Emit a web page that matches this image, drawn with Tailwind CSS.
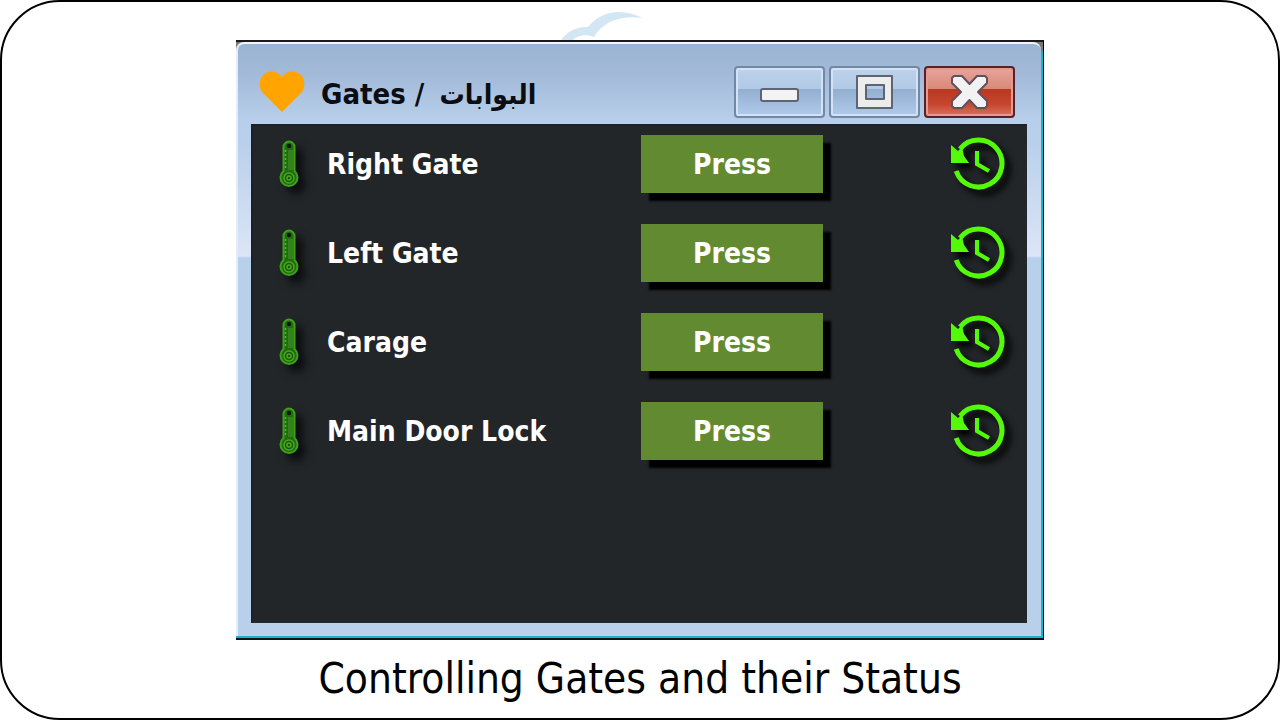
<!DOCTYPE html>
<html lang="en">
<head>
  <meta charset="UTF-8" />
  <meta name="viewport" content="width=device-width, initial-scale=1.0"/>
  <title>Controlling Gates and their Status</title>
  <script src="https://cdn.jsdelivr.net/npm/@tailwindcss/browser@4"></script>
</head>
<body class="bg-white min-h-screen flex font-['DejaVu_Sans_Condensed','DejaVu_Sans',sans-serif]">

  <!-- Shared icons -->
  <svg class="hidden">
    <symbol id="thermometer" viewBox="0 0 20 48">
      <path d="M4.500 7a5.500 5.500 0 0 1 11 0v24a8.500 8.500 0 1 1-11 0z" fill="#226a14" stroke="#3fa01a" stroke-width="2"/>
      <path d="M9 10h5.500v20H9z" fill="#34821b"/>
      <path d="M6.500 10v20" stroke="#52be22" stroke-width="1.500" stroke-dasharray="2 2"/>
      <circle cx="10" cy="6" r="2.200" fill="#0b1a08"/>
      <circle cx="10" cy="38" r="5" fill="#1c5412" stroke="#46ac1a" stroke-width="1.500"/>
      <circle cx="10" cy="38" r="2" fill="#1c5412" stroke="#46ac1a" stroke-width="1.500"/>
    </symbol>
    <symbol id="history" viewBox="0 0 56 54">
      <path d="M6.200 34A23.500 23.500 0 1 0 10 12" fill="none" stroke="#54fb08" stroke-width="5"/>
      <path d="M1 8l7 6 4-4 2 9 5 7H1z" fill="#54fb08"/>
      <path d="M27 14v13l12 7" fill="none" stroke="#54fb08" stroke-width="4"/>
    </symbol>
  </svg>

  <!-- Slide frame -->
  <main class="relative w-full flex flex-col items-center pt-[38px] border-2 border-black rounded-[60px]">

    <!-- Cloud behind the window -->
    <svg class="absolute top-[9px] left-1/2 -ml-[80px] w-[84px] h-8" viewBox="0 0 84 32">
      <path d="M0 31C6 20 18 15 28 16C42 -1 62 -3 83 7C62 4 43 10 34 26C24 22 16 25 11 31z" fill="#d3e6f3"/>
    </svg>

    <!-- Window -->
    <section class="relative w-full max-w-[808px] border-t-2 border-t-[#1a1a1a] border-b-2 border-b-[#061418] border-r border-r-black bg-[linear-gradient(#777777_0px,#777777_8px,#16b5cc_10px)] pb-[2px] pr-[2px]">
      <div class="border-t-2 border-l-2 border-t-[#f2f6fb] border-l-[#e4ecf7] rounded-t-lg bg-[linear-gradient(#9ab4d3_0px,#a2bad8_30px,#b7cfea_76px,#b9d0eb_100px,#dce5f6_212px,#b9d0eb_214px)] pl-[13px] pr-[14px] pb-[13px]">

        <header class="h-20 flex items-center">
          <svg class="w-[46px] h-[42px] ml-2 mt-5 mb-1" viewBox="0 0 46 42">
            <path d="M23 41L4 22C-1 17 0 9 4 4C9 -1 18 -1 23 6C28 -1 37 -1 42 4C46 9 47 17 42 22z" fill="#ffa400"/>
          </svg>
          <h1 class="ml-4 mt-5 flex-1 text-[29px] leading-8 font-bold text-[#0b0d12]">Gates / <span lang="ar" dir="rtl" class="ml-1.5 text-[28px]">البوابات</span></h1>
          <div class="flex gap-1 mt-4 mr-3">
            <button aria-label="Minimize" class="w-[91px] h-[52px] flex justify-center items-center rounded border-2 border-[#7288a5] shadow-[inset_0_0_0_2px_#d3e2f4] bg-[linear-gradient(#bdd2ea_0%,#b2cae6_43%,#93afcf_44%,#b0caea_100%)]">
              <svg class="w-10 h-10 mt-1" viewBox="0 0 40 40"><rect x="1" y="15" width="37" height="12" rx="2" fill="#f3f3f3" stroke="#5f6472" stroke-width="2"/></svg>
            </button>
            <button aria-label="Maximize" class="w-[91px] h-[52px] flex justify-center items-center rounded border-2 border-[#7288a5] shadow-[inset_0_0_0_2px_#d3e2f4] bg-[linear-gradient(#bdd2ea_0%,#b2cae6_43%,#93afcf_44%,#b0caea_100%)]">
              <svg class="w-10 h-10" viewBox="0 0 40 40"><path d="M2 4h35v32H2zM11 13v14h18V13z" fill="#ececec" fill-rule="evenodd" stroke="#5f6472" stroke-width="2" stroke-linejoin="round"/></svg>
            </button>
            <button aria-label="Close" class="w-[91px] h-[52px] flex justify-center items-center rounded border-2 border-[#57202b] shadow-[inset_0_0_0_2px_#e59a8f] bg-[linear-gradient(#e6a69b_0%,#da8878_43%,#b93822_44%,#c5452e_75%,#d87360_100%)]">
              <svg class="w-10 h-10" viewBox="0 0 40 40"><path d="M4 4h8l7.500 8L27 4h8l2 2v5l-9 9 9 9v5l-2 2h-8l-7.500-8L12 36H4l-2-2v-5l9-9-9-9V6z" fill="#f2f2f2" stroke="#605060" stroke-width="2" stroke-linejoin="round"/></svg>
            </button>
          </div>
        </header>

        <ul class="min-h-[499px] flex flex-col gap-[31px] pt-[9px] bg-[#222629] border-2 border-t-[#1b2029] border-l-[#1b2029] border-r-[#22272e] border-b-[#22272e] pl-[26px] pr-[19px] text-[28px] leading-8 font-bold text-white">
          <li class="h-[58px] flex items-center">
            <svg class="w-5 h-12 drop-shadow-[7px_7px_4px_#000000b0]"><use href="#thermometer"/></svg>
            <span class="ml-7 w-[314px] pt-0.5">Right Gate</span>
            <button class="w-[182px] h-[58px] pt-0.5 bg-[#628b31] shadow-[8px_8px_2px_#000000]">Press</button>
            <svg role="img" aria-label="History" class="ml-auto w-14 h-[54px] drop-shadow-[6px_6px_3px_#000000]"><use href="#history"/></svg>
          </li>
          <li class="h-[58px] flex items-center">
            <svg class="w-5 h-12 drop-shadow-[7px_7px_4px_#000000b0]"><use href="#thermometer"/></svg>
            <span class="ml-7 w-[314px] pt-0.5">Left Gate</span>
            <button class="w-[182px] h-[58px] pt-0.5 bg-[#628b31] shadow-[8px_8px_2px_#000000]">Press</button>
            <svg role="img" aria-label="History" class="ml-auto w-14 h-[54px] drop-shadow-[6px_6px_3px_#000000]"><use href="#history"/></svg>
          </li>
          <li class="h-[58px] flex items-center">
            <svg class="w-5 h-12 drop-shadow-[7px_7px_4px_#000000b0]"><use href="#thermometer"/></svg>
            <span class="ml-7 w-[314px] pt-0.5">Carage</span>
            <button class="w-[182px] h-[58px] pt-0.5 bg-[#628b31] shadow-[8px_8px_2px_#000000]">Press</button>
            <svg role="img" aria-label="History" class="ml-auto w-14 h-[54px] drop-shadow-[6px_6px_3px_#000000]"><use href="#history"/></svg>
          </li>
          <li class="h-[58px] flex items-center">
            <svg class="w-5 h-12 drop-shadow-[7px_7px_4px_#000000b0]"><use href="#thermometer"/></svg>
            <span class="ml-7 w-[314px] pt-0.5">Main Door Lock</span>
            <button class="w-[182px] h-[58px] pt-0.5 bg-[#628b31] shadow-[8px_8px_2px_#000000]">Press</button>
            <svg role="img" aria-label="History" class="ml-auto w-14 h-[54px] drop-shadow-[6px_6px_3px_#000000]"><use href="#history"/></svg>
          </li>
        </ul>
      </div>
    </section>

    <p class="mt-3 text-[42px] leading-[54px] text-black">Controlling Gates and their Status</p>
  </main>

</body>
</html>
